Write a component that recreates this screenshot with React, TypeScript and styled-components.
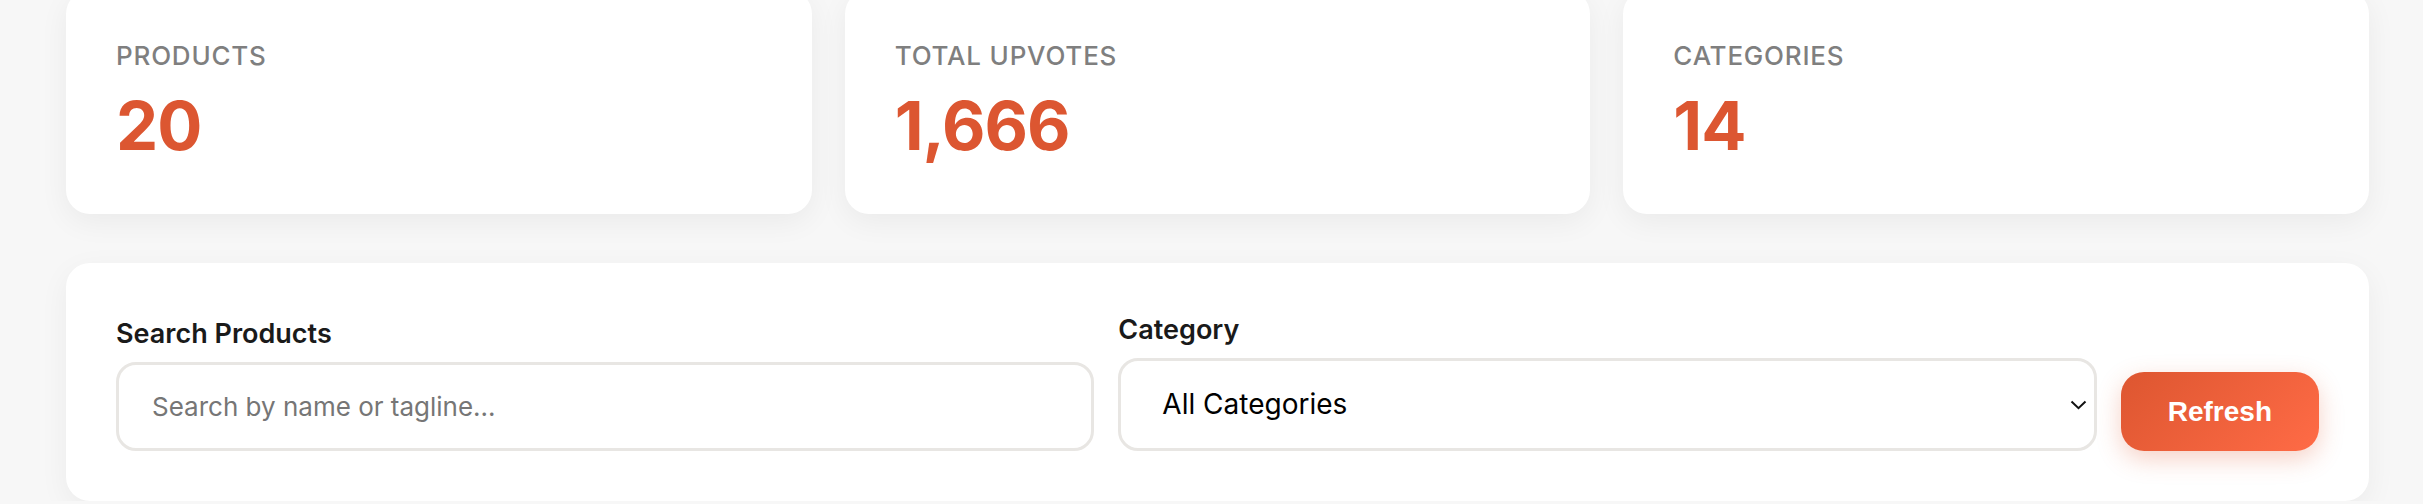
import React from "react";
import styled, { createGlobalStyle } from "styled-components";

const GlobalStyle = createGlobalStyle`
  html, body {
    margin: 0;
    padding: 0;
    background: #f7f7f7;
    font-family: Inter, "Noto Sans", sans-serif;
    overflow: hidden;
  }
  * { box-sizing: border-box; }
`;

const Page = styled.div`
  padding: 0 54px 0 66px;
  margin-top: -10px;
  display: flex;
  flex-direction: column;
  gap: 49px;
`;

const StatsGrid = styled.div`
  display: grid;
  grid-template-columns: repeat(3, 1fr);
  gap: 33px;
`;

const StatCard = styled.div`
  background: #ffffff;
  border-radius: 24px;
  padding: 50px 50px 51px;
  box-shadow: 0 8px 30px rgba(0, 0, 0, 0.055);
`;

const StatLabel = styled.div`
  font-size: 26px;
  font-weight: 500;
  letter-spacing: 0.8px;
  color: #7f7f7f;
  text-transform: uppercase;
  line-height: 32px;
`;

const StatValue = styled.div`
  margin-top: 17px;
  font-size: 67px;
  font-weight: 700;
  color: #dc5631;
  line-height: 74px;
  letter-spacing: -1px;
`;

const FilterPanel = styled.div`
  background: #ffffff;
  border-radius: 24px;
  padding: 50px;
  box-shadow: 0 8px 30px rgba(0, 0, 0, 0.05);
  display: grid;
  grid-template-columns: 1fr 1fr auto;
  gap: 24px;
  align-items: end;
`;

const Field = styled.div`
  display: flex;
  flex-direction: column;
  gap: 12px;
`;

const FieldLabel = styled.label`
  font-size: 27px;
  font-weight: 600;
  color: #1a1a1a;
  line-height: 33px;
`;

const TextInput = styled.input`
  font-family: Inter, sans-serif;
  font-size: 26px;
  line-height: 33px;
  padding: 25px 33px;
  border: 3px solid #e8e6e3;
  border-radius: 20px;
  background: #fff;
  color: #1a1a1a;
  outline: none;
  width: 100%;
  &::placeholder {
    color: #767676;
  }
`;

const SelectWrap = styled.div`
  position: relative;
`;

const Select = styled.select`
  appearance: none;
  -webkit-appearance: none;
  width: 100%;
  font-family: Inter, sans-serif;
  font-size: 28px;
  line-height: 35px;
  padding: 26px 60px 26px 41px;
  border: 3px solid #e8e6e3;
  border-radius: 20px;
  background: #fff;
  color: #000;
  outline: none;
`;

const Chevron = styled.svg`
  position: absolute;
  right: 10px;
  top: 42px;
  width: 17px;
  height: 10px;
  pointer-events: none;
`;

const RefreshButton = styled.button`
  font-family: "Liberation Sans", Arial, sans-serif;
  font-size: 28px;
  font-weight: 700;
  color: #fff;
  height: 79px;
  padding: 0 47px;
  border: none;
  border-radius: 23px;
  background: linear-gradient(135deg, #dd5630 0%, #ff6b46 100%);
  box-shadow: 0 8px 24px rgba(224, 90, 51, 0.28);
  cursor: pointer;
`;

const stats = [
  { label: "Products", value: "20" },
  { label: "Total Upvotes", value: "1,666" },
  { label: "Categories", value: "14" },
];

export default function App() {
  return (
    <>
      <GlobalStyle />
      <Page>
        <StatsGrid>
          {stats.map((s) => (
            <StatCard key={s.label}>
              <StatLabel>{s.label}</StatLabel>
              <StatValue>{s.value}</StatValue>
            </StatCard>
          ))}
        </StatsGrid>
        <FilterPanel>
          <Field>
            <FieldLabel htmlFor="search">Search Products</FieldLabel>
            <TextInput id="search" placeholder="Search by name or tagline..." />
          </Field>
          <Field>
            <FieldLabel htmlFor="category">Category</FieldLabel>
            <SelectWrap>
              <Select id="category" defaultValue="all">
                <option value="all">All Categories</option>
              </Select>
              <Chevron viewBox="0 0 17 10" fill="none">
                <polyline points="1.5,1.5 8.5,8.2 15.5,1.5" stroke="#111" strokeWidth="2" />
              </Chevron>
            </SelectWrap>
          </Field>
          <RefreshButton>Refresh</RefreshButton>
        </FilterPanel>
      </Page>
    </>
  );
}
